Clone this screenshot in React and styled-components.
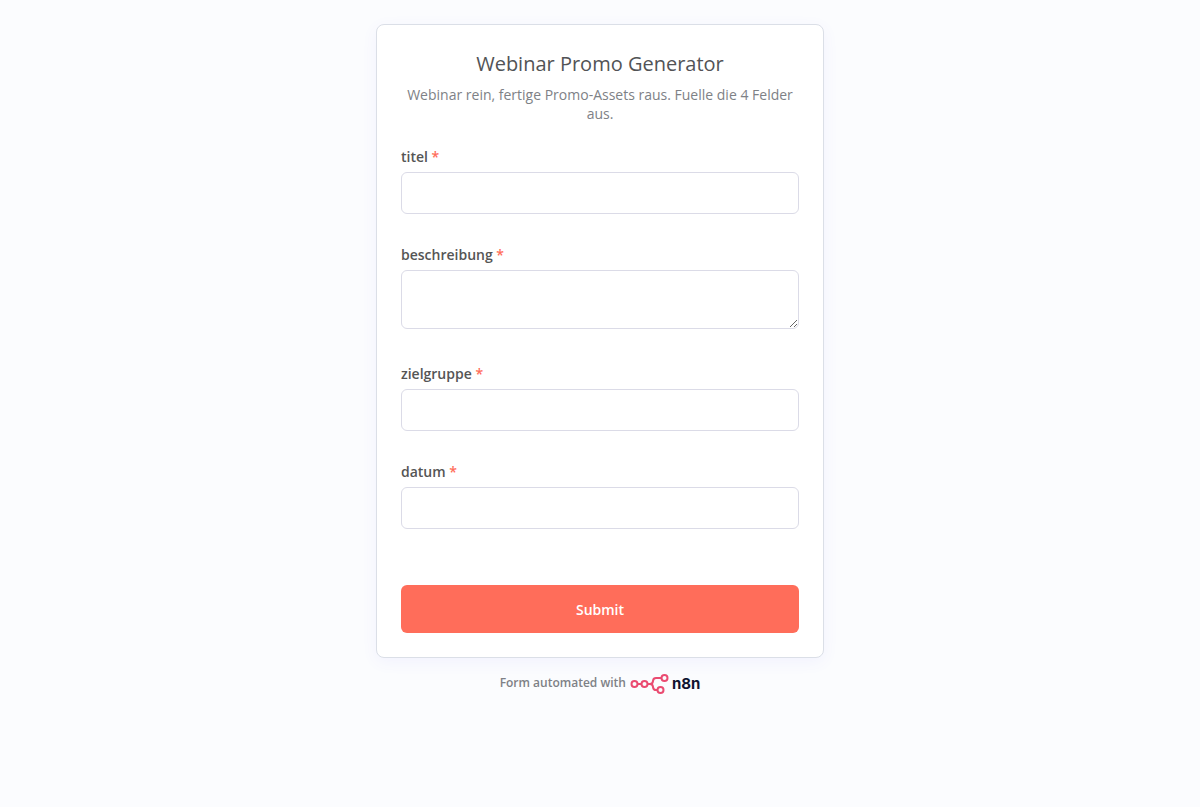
import React from 'react'
import styled, { createGlobalStyle, ThemeProvider } from 'styled-components'

const theme = {
  font: "'Open Sans', sans-serif",
  brandFont: "Inter, 'Open Sans', sans-serif",
  fontSizes: [12, 14, 15, 20],
  colors: {
    background: '#fbfcfe',
    card: '#ffffff',
    border: '#dbdfe7',
    inputBorder: '#dbdbe7',
    header: '#525356',
    text: '#7e8186',
    label: '#555555',
    primary: '#ff6d5a',
    brand: '#ea4b71',
    brandText: '#101330',
  },
}

const GlobalStyle = createGlobalStyle`
  *,
  *::before,
  *::after {
    box-sizing: border-box;
  }

  body {
    margin: 0;
    background: ${({ theme }) => theme.colors.background};
    font-family: ${({ theme }) => theme.font};
  }
`

const Page = styled.main`
  display: flex;
  flex-direction: column;
  align-items: center;
  padding: 24px 16px;
`

const Card = styled.form`
  display: flex;
  flex-direction: column;
  width: 100%;
  max-width: 448px;
  padding: 24px;
  background: ${({ theme }) => theme.colors.card};
  border: 1px solid ${({ theme }) => theme.colors.border};
  border-radius: 8px;
  box-shadow: 0 4px 16px 0 #634dff0f;
`

const Header = styled.header`
  margin-bottom: 24px;
  text-align: center;
`

const Title = styled.h1`
  margin: 0 0 6px;
  font-size: ${({ theme }) => theme.fontSizes[3]}px;
  font-weight: 400;
  line-height: 30px;
  color: ${({ theme }) => theme.colors.header};
`

const Description = styled.p`
  margin: 0;
  font-size: ${({ theme }) => theme.fontSizes[1]}px;
  line-height: 19px;
  color: ${({ theme }) => theme.colors.text};
`

const Fields = styled.div`
  display: flex;
  flex-direction: column;
  gap: 31px;
`

const FieldSet = styled.div`
  display: flex;
  flex-direction: column;
  gap: 6px;
`

const Label = styled.label`
  font-size: ${({ theme }) => theme.fontSizes[1]}px;
  font-weight: 600;
  line-height: 19px;
  color: ${({ theme }) => theme.colors.label};

  &::after {
    content: ' *';
    color: ${({ theme }) => theme.colors.primary};
  }
`

const Input = styled.input`
  width: 100%;
  height: 42px;
  padding: 12px;
  border: 1px solid ${({ theme }) => theme.colors.inputBorder};
  border-radius: 6px;
  background: ${({ theme }) => theme.colors.card};
  font-family: inherit;
  font-size: ${({ theme }) => theme.fontSizes[1]}px;
  color: ${({ theme }) => theme.colors.label};
`

const TextArea = styled(Input).attrs({ as: 'textarea' })`
  height: 59px;
  margin: 0 0 4px;
  resize: vertical;
`

const SubmitButton = styled.button`
  width: 100%;
  height: 48px;
  margin-top: 56px;
  border: 0;
  border-radius: 6px;
  background: ${({ theme }) => theme.colors.primary};
  font-family: inherit;
  font-size: ${({ theme }) => theme.fontSizes[1]}px;
  font-weight: 600;
  color: #ffffff;
  cursor: pointer;
`

const Attribution = styled.a`
  display: flex;
  align-items: flex-start;
  gap: 4px;
  margin-top: 16px;
  font-size: ${({ theme }) => theme.fontSizes[0]}px;
  font-weight: 600;
  line-height: 17px;
  color: ${({ theme }) => theme.colors.text};
  text-decoration: none;
`

const Logo = styled.span`
  display: flex;
  align-items: flex-start;
  gap: 3px;
`

const Wordmark = styled.span`
  font-family: ${({ theme }) => theme.brandFont};
  font-size: ${({ theme }) => theme.fontSizes[2]}px;
  font-weight: 700;
  line-height: 19px;
  color: ${({ theme }) => theme.colors.brandText};
`

const LogoMark = () => (
  <svg width="39" height="20" viewBox="0 0 228 120" aria-hidden="true">
    <g fill="none" stroke={theme.colors.brand} strokeWidth="12">
      <circle cx="24" cy="60" r="18" />
      <circle cx="84" cy="60" r="18" />
      <circle cx="204" cy="24" r="18" />
      <circle cx="180" cy="96" r="18" />
      <path d="M42 60H66" />
      <path d="M102 60H117C126 60 133 54 134.500 45L135.500 39C137 30 144 24 153 24H186" />
      <path d="M117 60C126 60 133 66 134.500 75L135.500 81C137 90 144 96 153 96H162" />
    </g>
  </svg>
)

const fields = [
  { name: 'titel' },
  { name: 'beschreibung', type: 'textarea' },
  { name: 'zielgruppe' },
  { name: 'datum' },
]

const Field = ({ name, type }) => (
  <FieldSet>
    <Label htmlFor={name}>{name}</Label>
    {type === 'textarea' ? (
      <TextArea id={name} name={name} required />
    ) : (
      <Input id={name} name={name} type="text" required />
    )}
  </FieldSet>
)

const App = () => (
  <ThemeProvider theme={theme}>
    <GlobalStyle />
    <Page>
      <Card onSubmit={e => e.preventDefault()}>
        <Header>
          <Title>Webinar Promo Generator</Title>
          <Description>
            Webinar rein, fertige Promo-Assets raus. Fuelle die 4 Felder aus.
          </Description>
        </Header>
        <Fields>
          {fields.map(field => (
            <Field key={field.name} {...field} />
          ))}
        </Fields>
        <SubmitButton type="submit">Submit</SubmitButton>
      </Card>
      <Attribution href="https://n8n.io">
        Form automated with
        <Logo>
          <LogoMark />
          <Wordmark>n8n</Wordmark>
        </Logo>
      </Attribution>
    </Page>
  </ThemeProvider>
)

export default App
